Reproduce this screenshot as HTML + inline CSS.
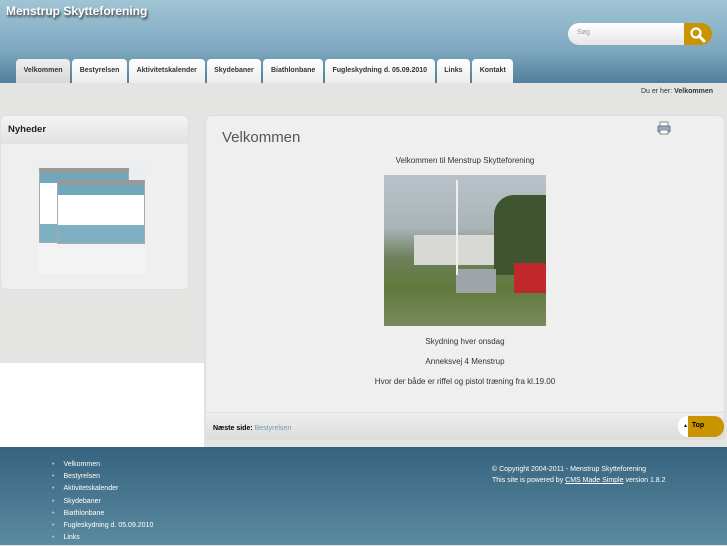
<!DOCTYPE html>
<html><head><style>
*{margin:0;padding:0;box-sizing:border-box}
body{width:727px;height:545px;overflow:hidden;font-family:"Liberation Sans",sans-serif;background:#e4e4e2;position:relative}
.hdr{position:absolute;left:0;top:0;width:727px;height:83px;background:linear-gradient(#a1c4d5,#7ea9c0 60%,#517f9b)}
.title{position:absolute;left:6px;top:4px;color:#fff;font-weight:bold;font-size:12px;text-shadow:1px 2px 2px #333}
.search{position:absolute;left:568px;top:23px;width:116px;height:22px;border-radius:11px 0 0 11px;background:linear-gradient(#fff,#e6e6e6);font-size:7px;color:#999;padding:6px 0 0 9px}
.sbtn{position:absolute;left:684px;top:23px;width:28px;height:22px;border-radius:0 11px 11px 0;background:#c99400}
.nav{position:absolute;top:59px;left:16px;display:flex;gap:2px}
.nav div{height:24px;background:linear-gradient(#fff,#ececec);border-radius:4px 4px 0 0;font-size:7px;font-weight:bold;color:#333;padding:8px 7.6px 0;white-space:nowrap}
.nav div.a{background:linear-gradient(#eee,#d8d8d8)}
.crumb{position:absolute;right:14px;top:88px;font-size:7px;color:#333}
.side{position:absolute;left:0;top:115px;width:189px;height:175px;background:#efefef;border-radius:6px;border:1px solid #e0e0e0}
.side h3{height:28px;background:linear-gradient(#f3f3f3,#e2e2e2);font-size:9.5px;padding:8px 7px;color:#222;border-radius:6px 6px 0 0}
.white{position:absolute;left:0;top:363px;width:204px;height:84px;background:#fff}
.main{position:absolute;left:205px;top:115px;width:520px;height:325px;background:#efefef;border-radius:6px;border:1px solid #ddd}
.main h1{position:absolute;left:16px;top:13px;font-weight:normal;font-size:15px;color:#555}
.c{position:absolute;left:0;width:100%;text-align:center;font-size:8px;color:#333}
.foot2{position:absolute;left:0;bottom:0;width:100%;height:27px;background:linear-gradient(#eee,#ddd);border-top:1px solid #ddd;font-size:7px;padding:12px 7px}
.footer{position:absolute;left:0;top:447px;width:727px;height:98px;background:linear-gradient(#36637e,#5a8aa0)}
.footer ul{position:absolute;left:52px;top:14px;list-style:none}
.footer li{font-size:7px;color:#fff;height:12.2px}
.footer li:before{content:"•";color:#bcd;margin-right:9px}
.copy{position:absolute;left:492px;top:17px;font-size:7px;color:#fff;line-height:11px}
</style></head><body>
<div class="hdr"></div>
<div class="title">Menstrup Skytteforening</div>
<div class="search">Søg</div>
<div class="sbtn"><svg width="28" height="22"><circle cx="12" cy="10" r="4.5" fill="none" stroke="#fff" stroke-width="2.2"/><path d="M15 13l5 5" stroke="#fff" stroke-width="3" stroke-linecap="round"/></svg></div>
<div class="nav"><div class="a">Velkommen</div><div>Bestyrelsen</div><div>Aktivitetskalender</div><div>Skydebaner</div><div>Biathlonbane</div><div>Fugleskydning d. 05.09.2010</div><div>Links</div><div>Kontakt</div></div>
<div class="crumb">Du er her: <b>Velkommen</b></div>
<div class="side"><h3>Nyheder</h3>
<div style="position:absolute;left:38px;top:50px;width:106px;height:108px;background:linear-gradient(#e9eef0,#f4f4f4)">
<div style="position:absolute;left:0;top:2px;width:90px;height:75px;background:#fff;border:1px solid #aaa;border-top:5px solid #999"><div style="height:10px;background:#6fa8bd"></div><div style="position:absolute;bottom:0;width:100%;height:18px;background:#7fb0c2"></div></div>
<div style="position:absolute;left:18px;top:14px;width:88px;height:64px;background:#fff;border:1px solid #aaa;border-top:5px solid #999"><div style="height:10px;background:#6fa8bd"></div><div style="position:absolute;bottom:0;width:100%;height:18px;background:#7fb0c2"></div></div>
</div></div>
<div class="white"></div>
<div class="main"><h1>Velkommen</h1>
<svg style="position:absolute;left:451px;top:5px" width="14" height="14"><rect x="3" y="1" width="8" height="5" fill="#fff" stroke="#888"/><rect x="1" y="5" width="12" height="6" rx="1" fill="#9ab" stroke="#678"/><rect x="3" y="9" width="8" height="4" fill="#fff" stroke="#888"/></svg>
<div class="c" style="top:40px">Velkommen til Menstrup Skytteforening</div>
<div style="position:absolute;left:178px;top:59px;width:162px;height:151px;background:linear-gradient(#b8c2c8 0%,#aab4b8 35%,#6d7f5a 55%,#5f7a3c 75%,#7c8a5d 100%)">
<div style="position:absolute;left:30px;top:60px;width:80px;height:30px;background:#d8d8d4"></div>
<div style="position:absolute;left:110px;top:20px;width:52px;height:80px;background:#3f5530;border-radius:20px 0 0 0"></div>
<div style="position:absolute;left:130px;top:88px;width:32px;height:30px;background:#c0282c"></div>
<div style="position:absolute;left:72px;top:94px;width:40px;height:24px;background:#9ea4a8"></div>
<div style="position:absolute;left:72px;top:5px;width:2px;height:95px;background:#eee"></div>
</div>
<div class="c" style="top:221px">Skydning hver onsdag</div>
<div class="c" style="top:241px">Anneksvej 4 Menstrup</div>
<div class="c" style="top:261px">Hvor der både er riffel og pistol træning fra kl.19.00</div>
<div class="foot2"><b>Næste side:</b> <span style="color:#6a9cc0">Bestyrelsen</span></div>
<div style="position:absolute;left:472px;top:300px;width:46px;height:21px;border-radius:10px;background:linear-gradient(90deg,#fff 22%,#c99400 22%);font-size:7px;font-weight:bold;padding:6px 0 0 5px"><span style="font-size:5px">▲</span>&nbsp; Top</div>
</div>
<div class="footer"><ul><li>Velkommen</li><li>Bestyrelsen</li><li>Aktivitetskalender</li><li>Skydebaner</li><li>Biathlonbane</li><li>Fugleskydning d. 05.09.2010</li><li>Links</li></ul>
<div class="copy">© Copyright 2004-2011 - Menstrup Skytteforening<br>This site is powered by <u>CMS Made Simple</u> version 1.8.2</div></div>
</body></html>
